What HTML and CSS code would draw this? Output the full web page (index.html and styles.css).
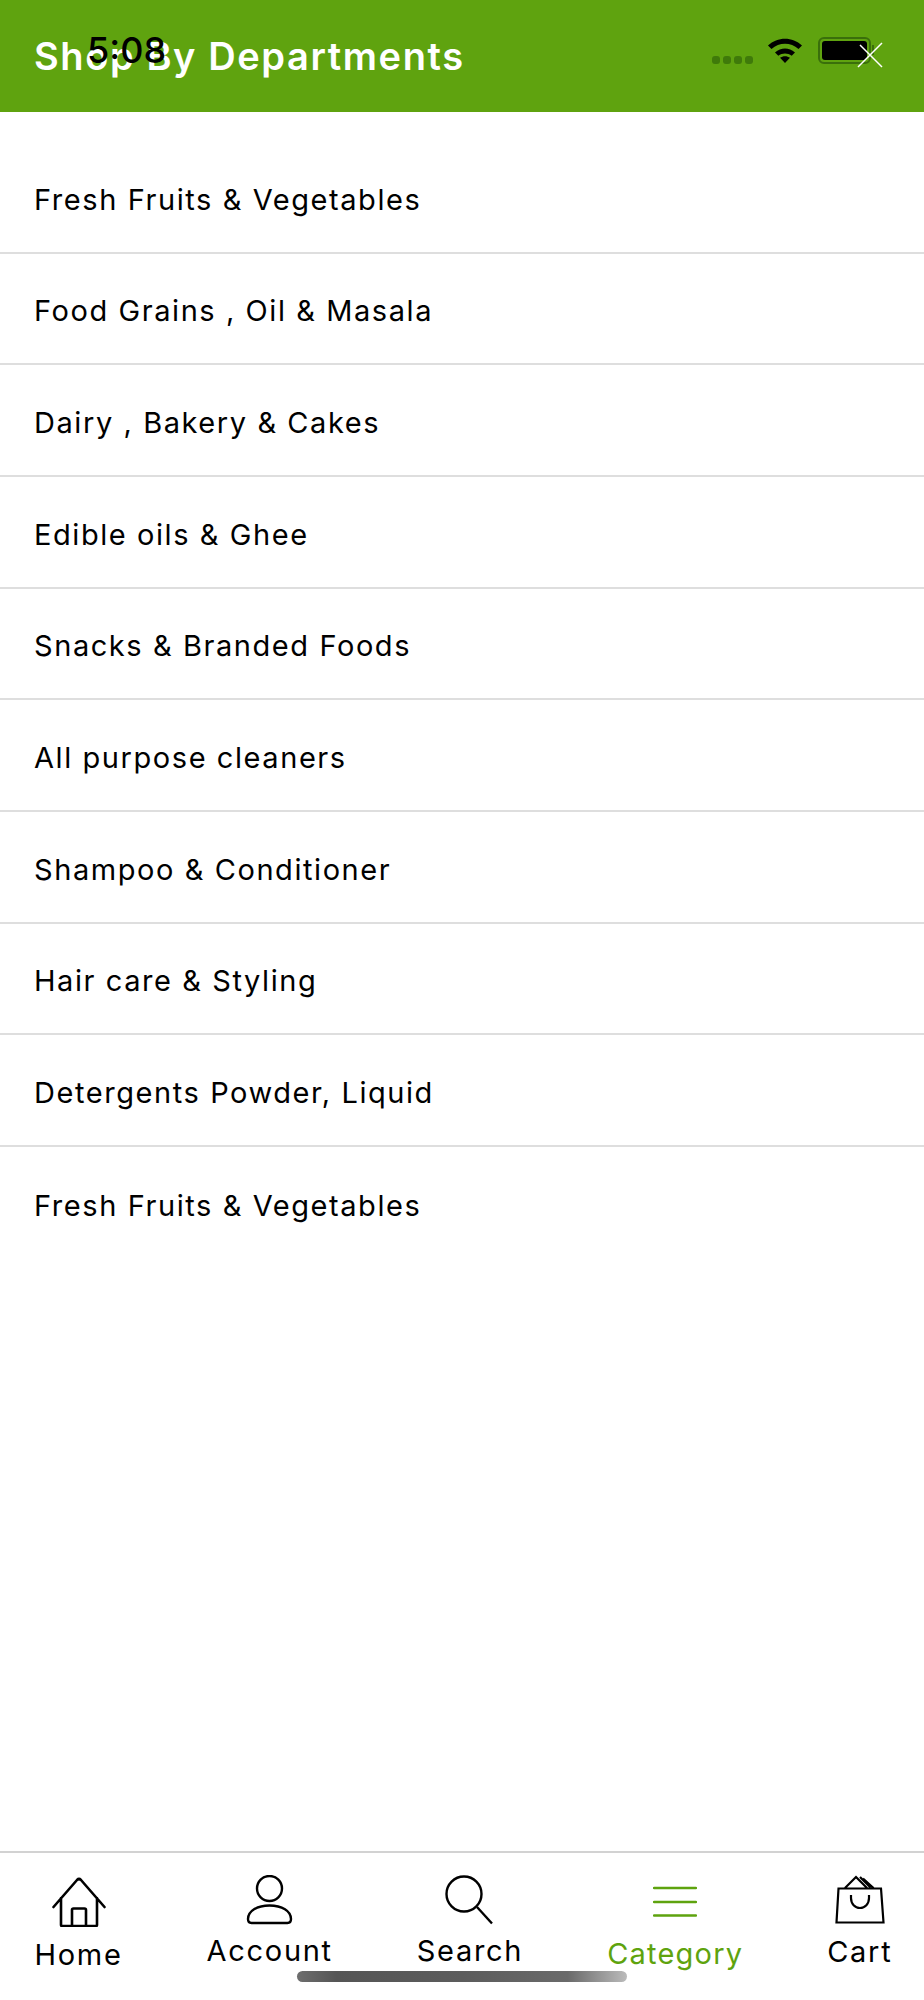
FILE: index.html
```html
<!DOCTYPE html>
<html lang="en">
<head>
<meta charset="utf-8">
<title>Shop By Departments</title>
<link rel="stylesheet" href="styles.css">
</head>
<body>
<div class="screen">
  <header class="header">
    <h1 class="title">Shop By Departments</h1>
    <svg class="close" viewBox="0 0 26 26" width="26" height="26"><path d="M1 25 25 1M3 3l22 22" fill="none" stroke="#fff" stroke-width="1.500"/></svg>
  </header>
  <div class="status">
    <span class="time">5:08</span>
    <span class="dots"><i></i><i></i><i></i><i></i></span>
    <svg class="wifi" viewBox="0 0 36 28" width="36" height="28"><path d="M1 9.500C10.500 .5 25.500 .5 35 9.500l-3.500 3.500C23.800 6 12.200 6 4.500 13zM8 16.500c6-5.200 14-5.200 20 0l-3.300 3.300c-4-3.200-9.400-3.200-13.400 0zM13 21.800c3-2.200 7-2.200 10 0l-5 5.200z"/></svg>
    <span class="battery"><span class="battery-fill"></span></span>
  </div>
  <ul class="list">
    <li class="row">Fresh Fruits &amp; Vegetables</li>
    <li class="row">Food Grains , Oil &amp; Masala</li>
    <li class="row">Dairy , Bakery &amp; Cakes</li>
    <li class="row">Edible oils &amp; Ghee</li>
    <li class="row">Snacks &amp; Branded Foods</li>
    <li class="row">All purpose cleaners</li>
    <li class="row">Shampoo &amp; Conditioner</li>
    <li class="row">Hair care &amp; Styling</li>
    <li class="row">Detergents Powder, Liquid</li>
    <li class="row">Fresh Fruits &amp; Vegetables</li>
  </ul>
  <nav class="nav">
    <div class="tab tab-home">
      <svg viewBox="0 0 54 52" width="54" height="52"><path d="M1.500 32 25 5q2-2 4 0L52.500 32M9 23v27q0 1 1 1h34q1 0 1-1V23M20 51V35q0-1.500 1.500-1.500h11q1.500 0 1.500 1.500v16" fill="none" stroke="#000" stroke-width="2.600" stroke-linecap="round" stroke-linejoin="round"/></svg>
      <span>Home</span>
    </div>
    <div class="tab tab-account">
      <svg viewBox="0 0 50 50" width="50" height="50"><circle cx="24.500" cy="13.500" r="12.500" fill="none" stroke="#000" stroke-width="2.400"/><path d="M3 44c0-8 9-13.500 21.500-13.500S46 36 46 44q0 4-3.500 4h-36Q3 48 3 44z" fill="none" stroke="#000" stroke-width="2.400"/></svg>
      <span>Account</span>
    </div>
    <div class="tab tab-search">
      <svg viewBox="0 0 50 50" width="50" height="50"><circle cx="19" cy="19" r="17.500" fill="none" stroke="#000" stroke-width="2.400"/><path d="M32 32 47 48.500" fill="none" stroke="#000" stroke-width="2.400"/></svg>
      <span>Search</span>
    </div>
    <div class="tab tab-category active">
      <svg viewBox="0 0 44 34" width="44" height="34"><path d="M1 2h42M1 16h42M1 29.500h42" fill="none" stroke="#5ea30e" stroke-width="2.400" stroke-linecap="round"/></svg>
      <span>Category</span>
    </div>
    <div class="tab tab-cart">
      <svg viewBox="0 0 50 50" width="50" height="50"><path d="M3.500 13.500H46l2.500 34H1.500zM10 13 21 2l11 11M28 3.500 38.500 13M25 2l10.500 10.500M16 20v3c0 6 4 10 9 10s9-4 9-10v-3" fill="none" stroke="#000" stroke-width="2.200"/></svg>
      <span>Cart</span>
    </div>
  </nav>
  <div class="home-bar"></div>
</div>
</body>
</html>
```
FILE: styles.css
```css
* { box-sizing: border-box; }
html, body { margin: 0; padding: 0; background: #fff; }
.screen {
  position: relative;
  width: 924px;
  height: 2000px;
  display: flex;
  flex-direction: column;
  font-family: "Inter", "Open Sans", sans-serif;
  color: #000;
  overflow: hidden;
}
.header {
  height: 112px;
  flex: none;
  background: #5fa30f;
  display: flex;
  align-items: center;
  justify-content: space-between;
  padding: 0 41px 0 34px;
}
.title {
  margin: 0 0 1px;
  color: #fff;
  font-size: 38px;
  font-weight: 600;
  line-height: 1;
  letter-spacing: 1.600px;
}
.close { position: relative; z-index: 1; margin-top: -3px; }
.status { position: absolute; left: 0; top: 0; width: 924px; height: 112px; }
.time {
  position: absolute;
  left: 87px;
  top: 30px;
  font-size: 36px;
  font-weight: 500;
  line-height: 40px;
}
.dots { position: absolute; left: 712px; top: 56px; display: flex; gap: 3px; }
.dots i { width: 8px; height: 8px; border-radius: 3px; background: #3f7a0a; }
.wifi { position: absolute; left: 767px; top: 36px; }
.battery {
  position: absolute;
  left: 818px;
  top: 37px;
  width: 53px;
  height: 27px;
  border: 2px solid #3a6f0b;
  border-radius: 6px;
  padding: 2px;
}
.battery::after {
  content: "";
  position: absolute;
  right: -5px;
  top: 6px;
  width: 2px;
  height: 10px;
  background: #3a6f0b;
}
.battery-fill { display: block; height: 100%; background: #000; border-radius: 3px; }
.list { list-style: none; margin: 0; padding: 30px 0 0; flex: 1; }
.row {
  height: 111.67px;
  padding: 5px 34px 0;
  display: flex;
  align-items: center;
  border-bottom: 2px solid #dedede;
  font-size: 29px;
  letter-spacing: 1.570px;
}
.row:last-child { border-bottom: 0; }
.nav {
  flex: none;
  height: 149px;
  border-top: 2px solid #d2d2d2;
  display: flex;
  gap: 84px;
  padding: 22px 0 0 34.5px;
  align-items: flex-start;
}
.tab {
  display: flex;
  flex-direction: column;
  align-items: center;
  font-size: 29px;
  line-height: 36px;
  letter-spacing: 1.700px;
}
.tab svg { display: block; flex: none; }
.tab span { white-space: nowrap; }
.tab-home svg { margin-bottom: 10px; }
.tab-account svg { margin-bottom: 8px; }
.tab-search svg { margin-bottom: 8px; }
.tab-category { letter-spacing: 1.200px; }
.tab-category svg { margin-top: 11px; margin-bottom: 16px; }
.tab-cart svg { margin-bottom: 9px; }
.active { color: #5ea30e; }
.home-bar {
  position: absolute;
  left: 297px;
  top: 1971px;
  width: 330px;
  height: 11px;
  border-radius: 6px;
  background: linear-gradient(90deg, #6e6e6e 0%, #555 12%, #5c5c5c 50%, #6a6a6a 82%, #bbb 100%);
}
```
